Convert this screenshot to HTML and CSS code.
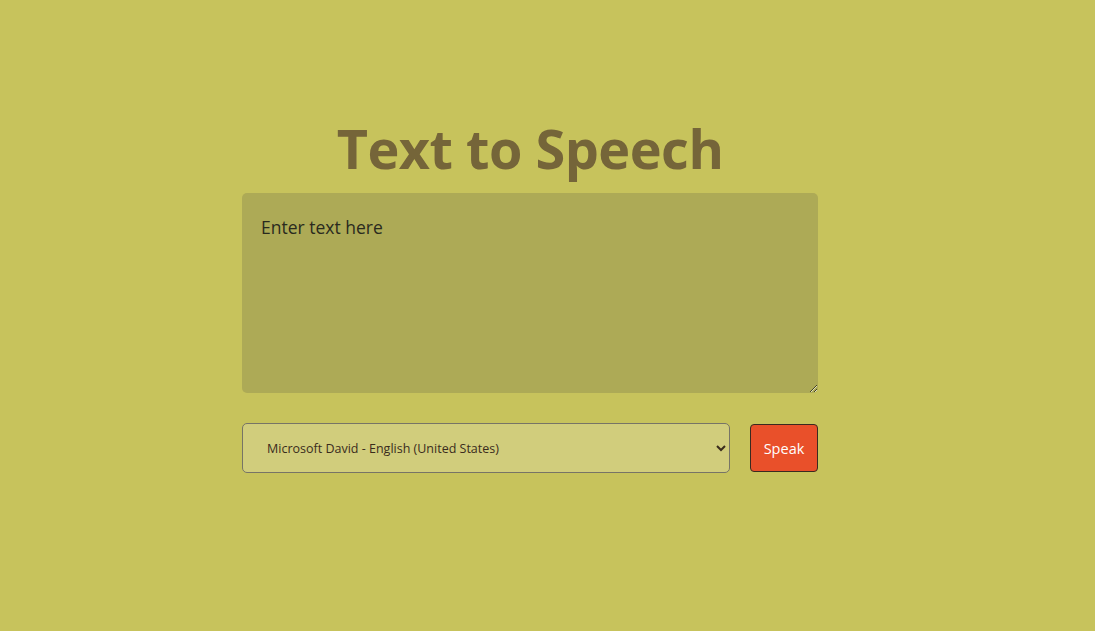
FILE: index.html
```html
<!DOCTYPE html>
<html lang="en">
<head>
<meta charset="utf-8">
<title>Text to Speech</title>
<link rel="stylesheet" href="styles.css">
</head>
<body>
<main class="app">
  <h1 class="title">Text to Speech</h1>
  <textarea class="text-input" placeholder="Enter text here"></textarea>
  <div class="controls">
    <select class="voice-select">
      <option>Microsoft David - English (United States)</option>
    </select>
    <button class="speak-btn">Speak</button>
  </div>
</main>
</body>
</html>
```

FILE: styles.css
```css
* { box-sizing: border-box; }
html, body { height: 100%; }
body {
  margin: 0;
  background: #c7c35c;
  font-family: "Open Sans", "Noto Sans", sans-serif;
}
.app {
  width: 576px;
  margin: 0 0 0 242px;
  padding-top: 112px;
  display: flex;
  flex-direction: column;
  align-items: stretch;
}
.title {
  margin: 0 0 8px;
  text-align: center;
  font-size: 54px;
  line-height: 73px;
  font-weight: 700;
  color: #756539;
  letter-spacing: -0.5px;
}
.text-input {
  display: block;
  width: 576px;
  height: 200px;
  padding: 22px 19px;
  border: none;
  border-radius: 5px;
  background: #adaa56;
  font-family: inherit;
  font-size: 17.5px;
  color: #222;
  resize: vertical;
  outline: none;
}
.text-input::placeholder { color: #2a2a1e; opacity: 1; }
.controls {
  display: flex;
  align-items: center;
  gap: 20px;
  margin-top: 30px;
}
.voice-select {
  width: 488px;
  height: 50px;
  padding: 0 20px;
  border: 1px solid #777466;
  border-radius: 5px;
  background: #d1cd7c;
  font-family: inherit;
  font-size: 12.5px;
  color: #3a2c1c;
}
.speak-btn {
  width: 68px;
  height: 48px;
  border: 1px solid #3a2a20;
  border-radius: 4px;
  background: #e9502a;
  color: #fff;
  font-family: inherit;
  font-size: 14.5px;
  cursor: pointer;
}
```
